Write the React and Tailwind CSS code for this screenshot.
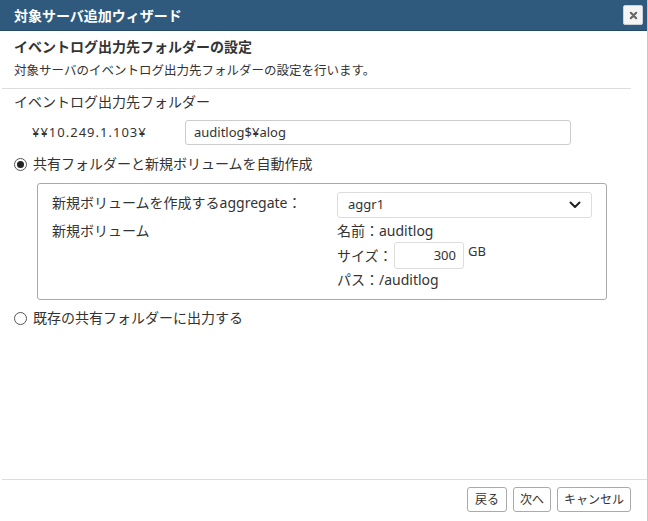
export default function App() {
  return (
    <div
      className="flex h-[521px] w-[648px] flex-col overflow-hidden border-r border-[#c8c8c8] bg-white text-[13px] text-[#333]"
      style={{ fontFamily: '"Noto Sans", "Noto Sans CJK JP", sans-serif' }}
    >
      {/* title bar */}
      <div className="flex h-[31px] shrink-0 items-center justify-between border-b border-[#24486a] bg-[#2f5a7e] pl-[14px] pr-[4px]">
        <span className="text-[14px] font-bold text-white">対象サーバ追加ウィザード</span>
        <button className="grid h-[20px] w-[20px] place-items-center rounded-[2px] border border-[#c9d2da] bg-[#f4f4f4]">
          <svg viewBox="0 0 10 10" className="h-[9px] w-[9px]" stroke="#666" strokeWidth="2.4" strokeLinecap="round">
            <path d="M2 2l6 6M8 2L2 8" />
          </svg>
        </button>
      </div>

      <div className="flex-1 pl-[14px] pr-[16px]">
        <h2 className="mt-[6px] text-[14px] font-bold leading-[20px]">イベントログ出力先フォルダーの設定</h2>
        <p className="mt-[4px] text-[12.5px] leading-[20px]">対象サーバのイベントログ出力先フォルダーの設定を行います。</p>
        <div className="-ml-[12px] mt-[7px] border-t border-[#ddd]" />

        <div className="mt-[3px] text-[14px] leading-[20px]">イベントログ出力先フォルダー</div>
        <div className="mt-[8px] flex items-center">
          <span className="w-[171px] pl-[18px] text-[13px] tracking-[1px]">¥¥10.249.1.103¥</span>
          <div className="flex h-[25px] w-[386px] items-center rounded-[3px] border border-[#ccc] px-[8px] text-[13px]">
            auditlog$¥alog
          </div>
        </div>

        <label className="mt-[9px] flex items-center gap-[6px] text-[14px] leading-[20px]">
          <span className="grid h-[13px] w-[13px] place-items-center rounded-full border border-[#555]">
            <span className="h-[7px] w-[7px] rounded-full bg-[#222]" />
          </span>
          共有フォルダーと新規ボリュームを自動作成
        </label>

        <div className="ml-[23px] mt-[9px] flex h-[117px] w-[570px] rounded-[3px] border border-[#aaa] pt-[8px]">
          <div className="w-[299px] pl-[14px] text-[14px]">
            <div className="mt-[1px] leading-[20px]">新規ボリュームを作成するaggregate：</div>
            <div className="mt-[8px] leading-[20px]">新規ボリューム</div>
          </div>
          <div className="text-[14px]">
            <div className="flex h-[26px] w-[255px] items-center justify-between rounded-[3px] border border-[#ddd] pl-[10px] pr-[10px] text-[13px]">
              aggr1
              <svg viewBox="0 0 12 8" className="h-[8px] w-[12px]" fill="none" stroke="#222" strokeWidth="2" strokeLinecap="round" strokeLinejoin="round">
                <path d="M1.5 1.5L6 6l4.5-4.5" />
              </svg>
            </div>
            <div className="mt-[3px] leading-[20px]">名前：auditlog</div>
            <div className="mt-[1px] flex items-start">
              <span className="mt-[4px] w-[57px] leading-[20px]">サイズ：</span>
              <div className="flex h-[27px] w-[70px] items-center justify-end rounded-[3px] border border-[#ddd] pr-[7px] text-[13px]">
                300
              </div>
              <span className="ml-[4px] text-[13px] leading-[18px]">GB</span>
            </div>
            <div className="mt-[1px] leading-[20px]">パス：/auditlog</div>
          </div>
        </div>

        <label className="mt-[8px] flex items-center gap-[6px] text-[14px] leading-[20px]">
          <span className="h-[13px] w-[13px] rounded-full border border-[#555]" />
          既存の共有フォルダーに出力する
        </label>
      </div>

      {/* footer */}
      <div className="ml-[2px] h-[42px] shrink-0 border-t border-[#ddd]">
        <div className="mr-[16px] mt-[7px] flex justify-end gap-[6px] text-[12px]">
          <button className="h-[25px] w-[40px] rounded-[3px] border border-[#aaa] bg-white">戻る</button>
          <button className="h-[25px] w-[38px] rounded-[3px] border border-[#aaa] bg-white">次へ</button>
          <button className="h-[25px] w-[74px] rounded-[3px] border border-[#aaa] bg-white">キャンセル</button>
        </div>
      </div>
    </div>
  );
}
